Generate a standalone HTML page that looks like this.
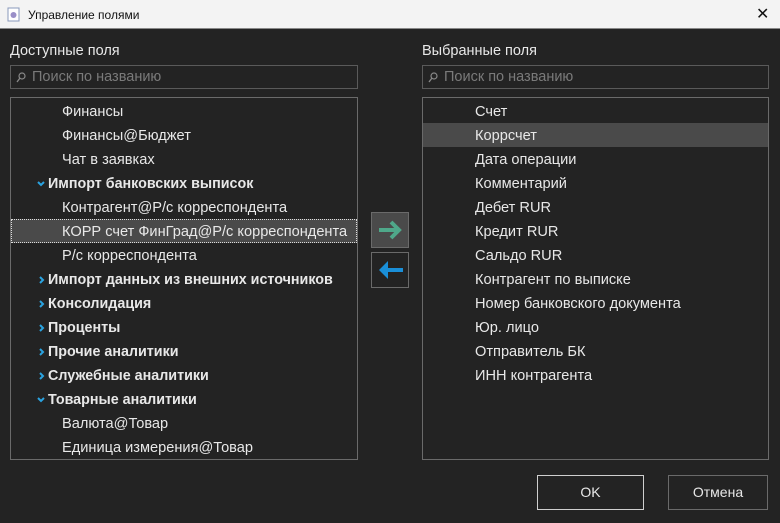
<!DOCTYPE html>
<html><head><meta charset="utf-8"><style>
*{margin:0;padding:0;box-sizing:border-box}
body{width:780px;height:523px;background:#232323;font-family:"Liberation Sans",sans-serif;color:#e8e8e8;position:relative;overflow:hidden;font-size:14px}
.title{position:absolute;left:0;top:0;width:780px;height:29px;background:#f3f3f3;color:#111;font-size:12px;border-bottom:1px solid #888}
.title span{position:absolute;left:28px;top:8px}
.lbl{position:absolute;top:43px;font-size:14.5px}
.search{position:absolute;top:65px;height:24px;border:1px solid #5a5a5a;color:#7a7a7a;font-size:14.5px;padding:3px 0 0 21px}
.list{position:absolute;top:97px;height:363px;border:1px solid #6a6a6a}
.r{position:absolute;left:0;right:0;height:24px;line-height:26px;white-space:nowrap;font-size:14.6px}
.b{font-weight:bold;font-size:14.3px}
.arr{position:absolute;left:25px;top:9px}
.btn{position:absolute;border:1px solid #6a6a6a;text-align:center}
</style></head><body>
<div class="title"><svg style="position:absolute;left:7px;top:7px" width="14" height="15"><rect x="1" y="1" width="11" height="13" fill="#fff" stroke="#8899bb"/><circle cx="6.5" cy="8" r="3" fill="#9a8fc8"/></svg><span>Управление полями</span><span style="left:756px;top:4px;font-size:16px">✕</span></div>
<div class="lbl" style="left:10px">Доступные поля</div>
<div class="lbl" style="left:422px">Выбранные поля</div>
<div class="search" style="left:10px;width:348px"><svg style="position:absolute;left:5px;top:6px" width="10" height="11"><circle cx="6" cy="4" r="3" stroke="#888" fill="none" stroke-width="1.2"/><path d="M4 6L1 10" stroke="#888" stroke-width="1.3"/></svg>Поиск по названию</div>
<div class="search" style="left:422px;width:347px"><svg style="position:absolute;left:5px;top:6px" width="10" height="11"><circle cx="6" cy="4" r="3" stroke="#888" fill="none" stroke-width="1.2"/><path d="M4 6L1 10" stroke="#888" stroke-width="1.3"/></svg>Поиск по названию</div>
<svg width="0" height="0" style="position:absolute"><defs>
<symbol id="d" viewBox="0 0 10 8"><path d="M2 2L5 5L8 2" stroke="#2aa3e0" stroke-width="2" fill="none"/></symbol>
<symbol id="rt" viewBox="0 0 10 8"><path d="M4 1L7 4L4 7" stroke="#2aa3e0" stroke-width="2" fill="none"/></symbol></defs></svg>
<div class="list" style="left:10px;width:348px">
<div class="r" style="top:1px;padding-left:51px">Финансы</div>
<div class="r" style="top:25px;padding-left:51px">Финансы@Бюджет</div>
<div class="r" style="top:49px;padding-left:51px">Чат в заявках</div>
<div class="r b" style="top:73px;padding-left:37px"><svg class="arr" width="10" height="8"><use href="#d"/></svg>Импорт банковских выписок</div>
<div class="r" style="top:97px;padding-left:51px">Контрагент@Р/с корреспондента</div>
<div class="r" style="top:121px;padding-left:51px;background:#4a4a4a;outline:1px dotted #ddd;outline-offset:-1px">КОРР счет ФинГрад@Р/с корреспондента</div>
<div class="r" style="top:145px;padding-left:51px">Р/с корреспондента</div>
<div class="r b" style="top:169px;padding-left:37px"><svg class="arr" width="10" height="8"><use href="#rt"/></svg>Импорт данных из внешних источников</div>
<div class="r b" style="top:193px;padding-left:37px"><svg class="arr" width="10" height="8"><use href="#rt"/></svg>Консолидация</div>
<div class="r b" style="top:217px;padding-left:37px"><svg class="arr" width="10" height="8"><use href="#rt"/></svg>Проценты</div>
<div class="r b" style="top:241px;padding-left:37px"><svg class="arr" width="10" height="8"><use href="#rt"/></svg>Прочие аналитики</div>
<div class="r b" style="top:265px;padding-left:37px"><svg class="arr" width="10" height="8"><use href="#rt"/></svg>Служебные аналитики</div>
<div class="r b" style="top:289px;padding-left:37px"><svg class="arr" width="10" height="8"><use href="#d"/></svg>Товарные аналитики</div>
<div class="r" style="top:313px;padding-left:51px">Валюта@Товар</div>
<div class="r" style="top:337px;padding-left:51px">Единица измерения@Товар</div>
</div>
<div class="list" style="left:422px;width:347px">
<div class="r" style="top:1px;padding-left:52px">Счет</div>
<div class="r" style="top:25px;padding-left:52px;background:#4a4a4a">Коррсчет</div>
<div class="r" style="top:49px;padding-left:52px">Дата операции</div>
<div class="r" style="top:73px;padding-left:52px">Комментарий</div>
<div class="r" style="top:97px;padding-left:52px">Дебет RUR</div>
<div class="r" style="top:121px;padding-left:52px">Кредит RUR</div>
<div class="r" style="top:145px;padding-left:52px">Сальдо RUR</div>
<div class="r" style="top:169px;padding-left:52px">Контрагент по выписке</div>
<div class="r" style="top:193px;padding-left:52px">Номер банковского документа</div>
<div class="r" style="top:217px;padding-left:52px">Юр. лицо</div>
<div class="r" style="top:241px;padding-left:52px">Отправитель БК</div>
<div class="r" style="top:265px;padding-left:52px">ИНН контрагента</div>
</div>
<div class="btn" style="left:371px;top:212px;width:38px;height:36px;background:#4a4a4a"><svg width="36" height="34"><path d="M7 17H27M19 9L27 17L19 25" stroke="#4fa88a" stroke-width="4" fill="none"/></svg></div>
<div class="btn" style="left:371px;top:252px;width:38px;height:36px"><svg width="36" height="34"><path d="M31 17H14" stroke="#1a8fd8" stroke-width="4"/><path d="M7 17L16 8V26Z" fill="#1a8fd8"/></svg></div>
<div class="btn" style="left:537px;top:475px;width:107px;height:35px;border-color:#cfcfcf;line-height:33px">OK</div>
<div class="btn" style="left:668px;top:475px;width:100px;height:35px;line-height:33px">Отмена</div>
</body></html>
